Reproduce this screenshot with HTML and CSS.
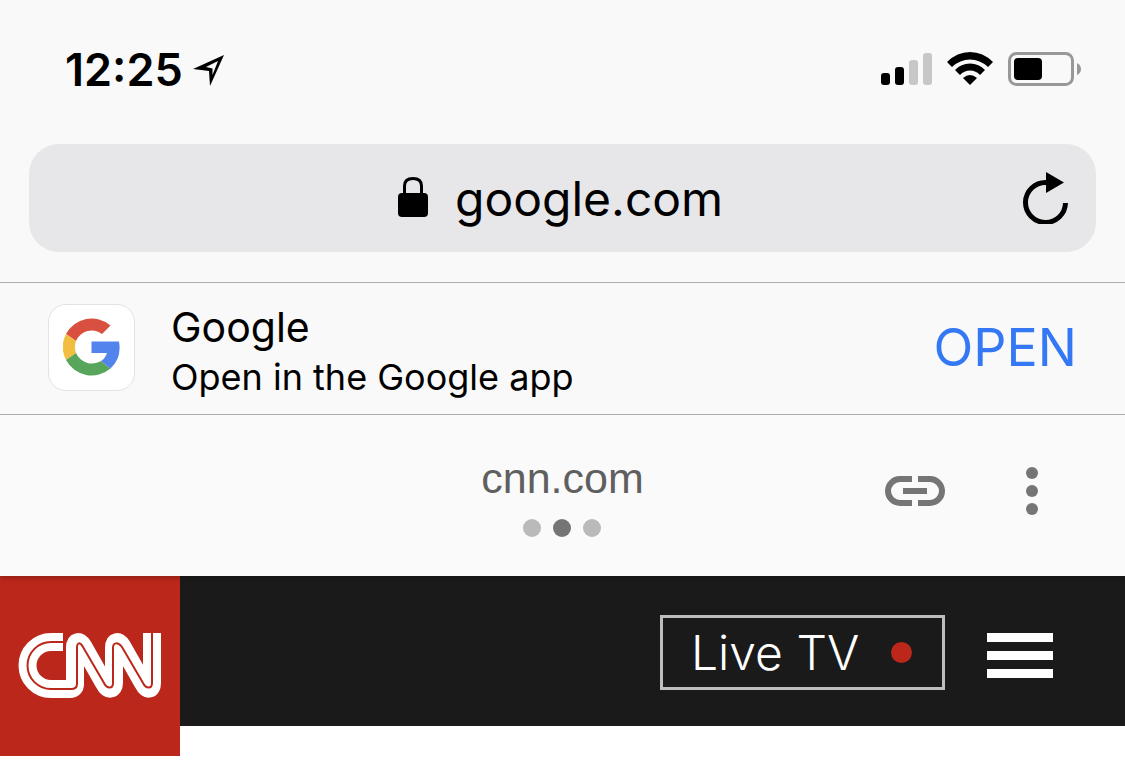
FILE: index.html
```html
<!DOCTYPE html>
<html lang="en">
<head>
  <meta charset="UTF-8">
  <meta name="viewport" content="width=device-width, initial-scale=1.0">
  <title>cnn.com</title>
  <link rel="stylesheet" href="styles.css">
</head>
<body>

<!-- Phone status bar -->
<div class="status-bar">
  <div class="clock">
    <span class="time">12:25</span>
    <svg width="32" height="34" viewBox="0 0 32 34">
      <path fill-rule="evenodd" d="M31 2 L17 33 L16 18 L0 16 Z M25 8 L13 14 L19.500 15.500 L19.500 22 Z"/>
    </svg>
  </div>
  <div class="indicators">
    <svg width="51" height="34" viewBox="0 0 51 34">
      <rect x="0" y="21" width="9" height="12" rx="3"/>
      <rect x="14" y="15" width="9" height="18" rx="3"/>
      <rect x="28" y="8" width="9" height="25" rx="3" fill="#c7c7c7"/>
      <rect x="42" y="1" width="9" height="32" rx="3" fill="#c7c7c7"/>
    </svg>
    <svg width="46" height="34" viewBox="0 0 46 34">
      <path d="M0 10 Q10 0 23 0 T46 10 L41 15 Q33 7.500 23 7.500 T5 15 Z"/>
      <path d="M8 18 Q14 11.500 23 11.500 T38 18 L33 23 Q29 18.500 23 18.500 T13 23 Z"/>
      <path d="M16 26 Q23 20 30 26 L23 33 Z"/>
    </svg>
    <svg width="74" height="34" viewBox="0 0 74 34">
      <rect x="1.500" y="1.500" width="63" height="31" rx="7" fill="none" stroke="#989898" stroke-width="3"/>
      <rect x="6" y="6" width="28" height="22" rx="4"/>
      <path d="M69 11 Q73 13 73 17 T69 23 Z" fill="#989898"/>
    </svg>
  </div>
</div>

<!-- Browser address bar -->
<div class="browser">
  <form class="address-bar">
    <label class="address">
      <svg width="30" height="42" viewBox="0 0 30 42">
        <path d="M6.500 18 V9 Q6.500 1.500 15 1.500 T23.500 9 V18" fill="none" stroke="#000" stroke-width="3"/>
        <rect x="0" y="16" width="30" height="24" rx="4"/>
      </svg>
      <input type="text" value="google.com" aria-label="Address">
    </label>
    <button type="button" class="reload" aria-label="Reload">
      <svg width="46" height="52" viewBox="0 0 46 52">
        <path d="M23 10.500 A20 20 0 1 0 42.500 31" fill="none" stroke="#000" stroke-width="5"/>
        <path d="M23 0 L41 10.500 L23 21 Z"/>
      </svg>
    </button>
  </form>
</div>

<!-- App banner -->
<section class="app-banner">
  <div class="app-icon">
    <svg width="58" height="60" viewBox="0 0 58 60">
      <path d="M3 16 A29 29 0 0 1 47.500 7.500 L39 16 A17 17 0 0 0 13 23 Z" fill="#d95040"/>
      <path d="M3 16 A29 29 0 0 0 3 42 L13 35 A18 18 0 0 1 13 23 Z" fill="#f1be42"/>
      <path d="M3 42 A29 29 0 0 0 47.500 50.500 L38 43 A17.500 17.500 0 0 1 13 35 Z" fill="#58a65c"/>
      <path d="M28.500 23.500 H56 Q59 40 47.500 50.500 L38 43 Q42.500 40 44 35 H28.500 Z" fill="#5383ec"/>
    </svg>
  </div>
  <div class="app-info">
    <div class="app-name">Google</div>
    <div class="app-text">Open in the Google app</div>
  </div>
  <a class="open" href="#">OPEN</a>
</section>

<!-- Viewer header -->
<section class="viewer">
  <div class="source">
    <div class="domain">cnn.com</div>
    <div class="dots">
      <span class="dot"></span>
      <span class="dot active"></span>
      <span class="dot"></span>
    </div>
  </div>
  <div class="viewer-actions">
    <button type="button" aria-label="Copy link">
      <svg width="60" height="30" viewBox="0 0 60 30" fill="#757575">
        <path d="M27 0 V6 H15 A9 9 0 0 0 15 24 H27 V30 H15 A15 15 0 0 1 15 0 Z"/>
        <path d="M33 0 V6 H45 A9 9 0 0 1 45 24 H33 V30 H45 A15 15 0 0 0 45 0 Z"/>
        <rect x="18" y="12" width="24" height="6"/>
      </svg>
    </button>
    <button type="button" aria-label="More">
      <svg width="12" height="48" viewBox="0 0 12 48" fill="#757575">
        <circle cx="6" cy="6" r="6"/>
        <circle cx="6" cy="24" r="6"/>
        <circle cx="6" cy="42" r="6"/>
      </svg>
    </button>
  </div>
</section>

<!-- Site header -->
<header class="site-header">
  <a class="logo" href="#" aria-label="CNN">
    <svg width="180" height="180" viewBox="0 0 180 180" fill="none">
      <path d="M63 66 H51 A23.500 23.500 0 0 0 51 113 H70 Q75 113 75 108 V72 C75 65 79 64 83 70 L104 107 C108 115 114 114 114 107 V72 C114 65 118 64 122 70 L143 107 C147 115 152 114 152 107 V57" stroke="#fff" stroke-width="18"/>
      <path d="M63 66 H51 A23.500 23.500 0 0 0 51 113 H71 Q77 113 77 108 V72 C77 66 80 66 83 71 L104 107 C107 113 113 113 113 107 V72 C113 66 118 66 122 71 L143 107 C146 113 152 113 152 107 V57" stroke="#bb271a" stroke-width="2"/>
    </svg>
  </a>
  <div class="site-nav">
    <a class="live" href="#">Live TV <span class="live-dot"></span></a>
    <button type="button" class="menu" aria-label="Menu">
      <span></span>
      <span></span>
      <span></span>
    </button>
  </div>
</header>

</body>
</html>
```
FILE: styles.css
```css
* {
  box-sizing: border-box;
}

body {
  font-family: Inter, 'Liberation Sans', sans-serif;
  min-height: 100vh;
  margin: 0;
  background-color: #fff;
  color: #000;
}

svg {
  display: block;
}

button {
  padding: 0;
  border: none;
  background: none;
  cursor: pointer;
}

a {
  text-decoration: none;
}

.status-bar {
  display: flex;
  justify-content: space-between;
  align-items: flex-start;
  height: 144px;
  padding: 52px 43px 0 65px;
  background-color: #f9f9f9;
}

.clock {
  display: flex;
  align-items: center;
  gap: 10px;
}

.time {
  font-size: 45px;
  line-height: 36px;
  font-weight: 600;
}

.indicators {
  display: flex;
  gap: 15px;
}

.browser {
  padding: 0 29px 30px;
  background-color: #f9f9f9;
}

.address-bar {
  display: grid;
  grid-template-columns: 1fr auto 1fr;
  align-items: center;
  height: 108px;
  padding: 0 27px;
  border-radius: 30px;
  background-color: #e7e7e9;
}

.address {
  grid-column: 2;
  display: flex;
  align-items: center;
  gap: 27px;
}

.address input {
  width: 272px;
  height: 60px;
  padding: 0;
  border: none;
  outline: none;
  background: none;
  font-family: inherit;
  font-size: 48px;
  color: #000;
}

.reload {
  justify-self: end;
}

.app-banner {
  position: relative;
  z-index: 1;
  display: flex;
  align-items: center;
  height: 133px;
  padding: 0 48px 2px;
  background-color: #f9f9f9;
  border-top: 1px solid #adadad;
  border-bottom: 1px solid #adadad;
}

.app-icon {
  display: flex;
  align-items: center;
  justify-content: center;
  width: 87px;
  height: 87px;
  background-color: #fff;
  border: 1px solid #e3e3e3;
  border-radius: 18px;
}

.app-info {
  flex: 1;
  margin-left: 36px;
  padding-top: 8px;
}

.app-name {
  font-size: 41px;
  line-height: 50px;
}

.app-text {
  font-size: 36px;
  line-height: 50px;
}

.open {
  font-size: 52px;
  color: #3478f6;
}

.viewer {
  position: relative;
  display: grid;
  grid-template-columns: 1fr auto 1fr;
  height: 161px;
  padding: 39px 87px 0;
  background-color: #fafafa;
  box-shadow: 0 1px 6px rgba(0, 0, 0, 0.3);
}

.source {
  grid-column: 2;
}

.domain {
  font-family: 'Liberation Sans', sans-serif;
  font-size: 43px;
  line-height: 48px;
  color: #5f5f5f;
}

.dots {
  display: flex;
  justify-content: center;
  gap: 12px;
  margin-top: 17px;
}

.dot {
  width: 18px;
  height: 18px;
  border-radius: 50%;
  background-color: #bababa;
}

.dot.active {
  background-color: #757575;
}

.viewer-actions {
  display: flex;
  justify-content: flex-end;
  align-items: center;
  gap: 81px;
  height: 74px;
}

.site-header {
  display: flex;
  justify-content: space-between;
  align-items: flex-start;
  height: 150px;
  background-color: #1a1a1a;
}

/* the logo hangs below the bar */
.logo {
  background-color: #bb271a;
}

.site-nav {
  display: flex;
  align-items: center;
  gap: 42px;
  padding: 39px 72px 0 0;
}

.live {
  display: flex;
  align-items: center;
  justify-content: space-between;
  width: 285px;
  height: 75px;
  padding: 0 30px 0 28px;
  border: 3px solid #bdbdbd;
  font-size: 48px;
  font-weight: 300;
  color: #fff;
}

.live-dot {
  width: 21px;
  height: 21px;
  border-radius: 50%;
  background-color: #bb271a;
}

.menu {
  display: flex;
  flex-direction: column;
  gap: 9px;
  width: 66px;
  margin-top: 6px;
}

.menu span {
  height: 9px;
  background-color: #fff;
}
```
